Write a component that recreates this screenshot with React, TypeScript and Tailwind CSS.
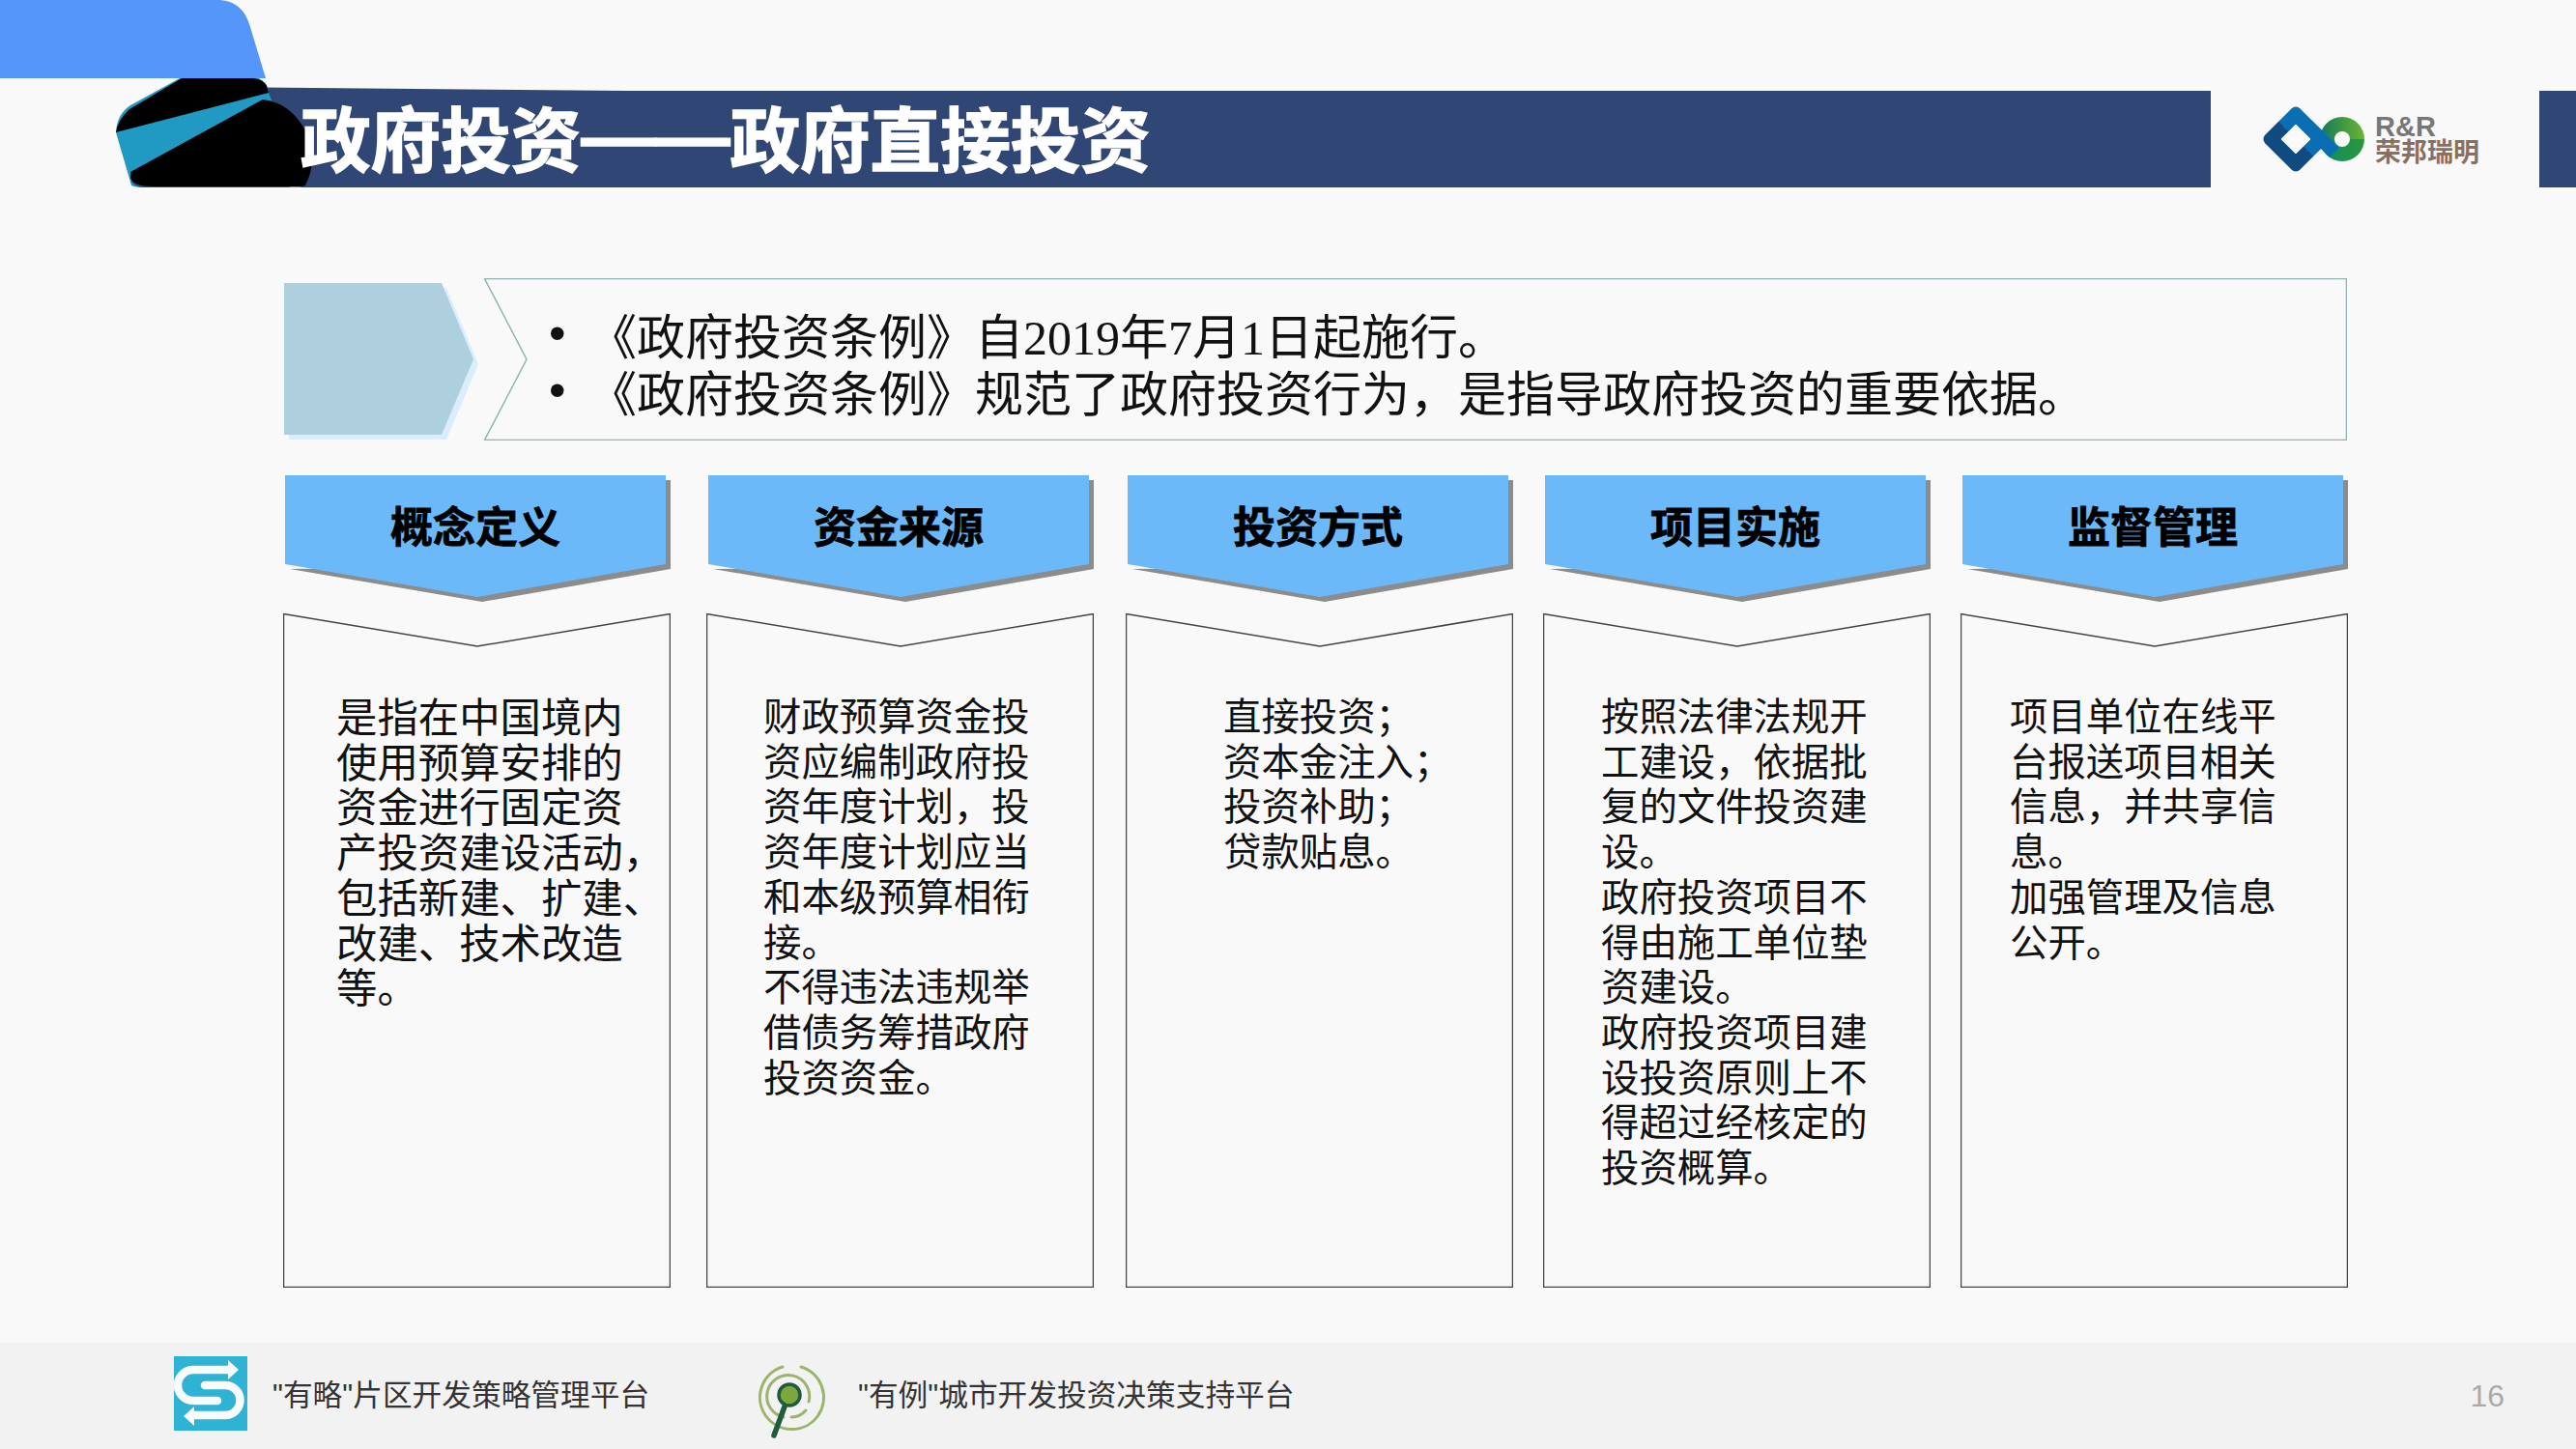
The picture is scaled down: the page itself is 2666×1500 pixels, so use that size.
import React from 'react';

const COLUMNS = [
  {
    title: '概念定义',
    gap: 'ml-0',
    text: 'pl-[55px] pt-[82px] text-[42.4px]',
    lines: ['是指在中国境内', '使用预算安排的', '资金进行固定资', '产投资建设活动，', '包括新建、扩建、', '改建、技术改造', '等。'],
  },
  {
    title: '资金来源',
    gap: 'ml-[37px]',
    text: 'pl-[59px] pt-[81px] text-[39.4px]',
    lines: ['财政预算资金投', '资应编制政府投', '资年度计划，投', '资年度计划应当', '和本级预算相衔', '接。', '不得违法违规举', '借债务筹措政府', '投资资金。'],
  },
  {
    title: '投资方式',
    gap: 'ml-[33px]',
    text: 'pl-[101px] pt-[81px] text-[39.4px]',
    lines: ['直接投资；', '资本金注入；', '投资补助；', '贷款贴息。'],
  },
  {
    title: '项目实施',
    gap: 'ml-[31px]',
    text: 'pl-[60px] pt-[81px] text-[39.4px]',
    lines: ['按照法律法规开', '工建设，依据批', '复的文件投资建', '设。', '政府投资项目不', '得由施工单位垫', '资建设。', '政府投资项目建', '设投资原则上不', '得超过经核定的', '投资概算。'],
  },
  {
    title: '监督管理',
    gap: 'ml-[31px]',
    text: 'pl-[51px] pt-[81px] text-[39.4px]',
    lines: ['项目单位在线平', '台报送项目相关', '信息，并共享信', '息。', '加强管理及信息', '公开。'],
  },
];

function CornerArt() {
  return (
    <svg className="absolute left-0 top-0" width="660" height="200" viewBox="0 0 660 200">
      <path d="M0 0H228Q252 2 259 28L275 81H0Z" fill="#5596fb" />
      <path d="M270 90.5L650 94H270Z" fill="#304775" />
      <path d="M186 81L135 109Q121 118 120 137L136 192Q140 194 150 194H310L316 190L278 96L276 88L268 81Z" fill="#2099c3" />
      <path d="M136 188Q140 194 150 194H300V185H136Z" fill="#304775" />
      <path d="M188 81H262Q273 82 276 89L278 96L120 137Q122 124 134 113Z" fill="#000" />
      <path d="M135 178L272 103Q300 106 316 135Q330 165 316 192Q314 193 308 193H158Q138 193 135 184Z" fill="#000" />
    </svg>
  );
}

function RongbangMark() {
  return (
    <svg width="120" height="80" viewBox="0 0 120 80">
      <defs>
        <linearGradient id="dia" x1="0" y1="4" x2="0" y2="76" gradientUnits="userSpaceOnUse">
          <stop offset="0.5" stopColor="#0b6db3" />
          <stop offset="0.5" stopColor="#0f4b80" />
        </linearGradient>
        <linearGradient id="ringTop" x1="64" y1="0" x2="109" y2="0" gradientUnits="userSpaceOnUse">
          <stop offset="0" stopColor="#127a5c" />
          <stop offset="1" stopColor="#6cb52d" />
        </linearGradient>
        <linearGradient id="ringBottom" x1="64" y1="0" x2="109" y2="0" gradientUnits="userSpaceOnUse">
          <stop offset="0" stopColor="#0f8c6a" />
          <stop offset="1" stopColor="#2b963a" />
        </linearGradient>
      </defs>
      <path d="M63 40A23 23 0 0 1 109 40Z" fill="url(#ringTop)" />
      <path d="M63 40A23 23 0 0 0 109 40Z" fill="url(#ringBottom)" />
      <circle cx="86" cy="40" r="8" fill="#f9f9f9" />
      <rect x="12.5" y="14.5" width="51" height="51" rx="6" transform="rotate(45 38 40)" fill="url(#dia)" />
      <path d="M50 26L78 54" stroke="#0b6db3" strokeWidth="14" />
      <rect x="27" y="29" width="22" height="22" rx="1" transform="rotate(45 38 40)" fill="#f9f9f9" />
    </svg>
  );
}

function SIcon() {
  return (
    <svg width="76" height="77" viewBox="0 0 76 77" className="shrink-0 -mt-[5px]">
      <rect width="76" height="77" fill="#2fb3d4" />
      <g fill="none" stroke="#f7fbfc" strokeWidth="8.5" strokeLinecap="round">
        <path d="M58 14H20A16 16 0 0 0 20 46H45" />
        <path d="M32 30H53A15.5 15.5 0 0 1 53 61H20" />
      </g>
      <path d="M67 14L56 4V24Z" fill="#f7fbfc" />
      <path d="M10 62L21 52V72Z" fill="#f7fbfc" />
    </svg>
  );
}

function ScopeIcon() {
  return (
    <svg width="100" height="95" viewBox="0 0 100 95" className="shrink-0">
      <g fill="none" stroke="#9cb36e" strokeWidth="3" strokeLinecap="round">
        <path d="M60 17A33 33 0 1 1 41 17" />
        <path d="M68 53A22 22 0 1 0 42 69" />
        <path d="M65 62A20 20 0 0 1 50 69" />
      </g>
      <path d="M43 58L32 88" stroke="#1f5b3c" strokeWidth="5.5" strokeLinecap="round" />
      <circle cx="48" cy="46" r="11" fill="#7aa83c" stroke="#1f5b3c" strokeWidth="3.5" />
    </svg>
  );
}

function Column({ col }: { col: (typeof COLUMNS)[number] }) {
  return (
    <div className={`w-[401px] shrink-0 flex flex-col ${col.gap}`}>
      <div className="relative h-[143px] pl-[2px]">
        <svg className="absolute left-0 top-0" width="401" height="143" viewBox="0 0 401 143">
          <path d="M7 97L206 131L401 97V5H396V92Z" fill="#8c8c8c" />
          <path d="M2 92L201 126L396 92V0H2Z" fill="#6bb9f9" />
        </svg>
        <div className="relative w-[394px] h-[101px] flex items-center justify-center text-[44px] font-bold leading-none text-black [-webkit-text-stroke:0.8px_black]">
          {col.title}
        </div>
      </div>
      <div className="relative flex-1">
        <svg className="absolute inset-0" width="401" height="698" viewBox="0 0 401 698">
          <path d="M0.5 0.5L201 34L400.5 0.5V697.5H0.5Z" fill="none" stroke="#444" strokeWidth="1.5" />
        </svg>
        <div className={`relative leading-[46.7px] text-[#111] ${col.text}`}>
          {col.lines.map(line => (
            <div key={line} className="whitespace-nowrap">{line}</div>
          ))}
        </div>
      </div>
    </div>
  );
}

export default function App() {
  return (
    <div className="relative w-[2666px] h-[1500px] overflow-hidden flex flex-col bg-[#f9f9f9] font-['Noto_Sans_CJK_SC',sans-serif]">
      <CornerArt />

      {/* header band */}
      <div className="mt-[94px] h-[100px] flex shrink-0">
        <div className="ml-[200px] w-[2088px] bg-[#304775] pl-[111px] flex items-center">
          <h1 className="relative z-10 -mt-[6px] h-[73px] flex items-center text-[72.6px] font-bold leading-none text-white whitespace-nowrap [-webkit-text-stroke:1.5px_white]">
            政府投资<span className="text-[77px] font-['Liberation_Sans',sans-serif]">——</span>政府直接投资
          </h1>
        </div>
        <div className="w-[340px] flex items-center pl-[50px]">
          <RongbangMark />
          <div className="flex flex-col">
            <span className="text-[29px] font-bold leading-[24px] text-[#777] font-['Liberation_Sans',sans-serif]">R&amp;R</span>
            <span className="text-[27px] font-bold leading-[28px] -mt-[1px] text-[#8b6f5c] whitespace-nowrap">荣邦瑞明</span>
          </div>
        </div>
        <div className="flex-1 bg-[#304775]" />
      </div>

      {/* policy summary */}
      <div className="mt-[94px] ml-[294px] h-[168px] flex shrink-0">
        <svg width="207" height="168" viewBox="0 0 207 168" className="shrink-0">
          <path d="M5 10H168L201 89L168 167H5Z" fill="#d9edfb" />
          <path d="M0 5H163L196 84L163 162H0Z" fill="#aed0de" />
        </svg>
        <div className="relative w-[1928px]">
          <svg className="absolute inset-0" width="1928" height="168" viewBox="0 0 1928 168">
            <path d="M0.5 0.5H1927.5V167.5H0.5L44 84Z" fill="none" stroke="#8fb5b3" strokeWidth="1.5" />
          </svg>
          <div className="relative h-full flex flex-col justify-center pl-[67px] pt-[5px] text-[50px] leading-[59px] text-[#111] whitespace-nowrap">
            <div className="flex h-[59px]">
              <span className="w-[41px] font-['Liberation_Sans',sans-serif]">•</span>
              <span>《政府投资条例》自<span className="font-['Liberation_Serif',serif]">2019</span>年<span className="font-['Liberation_Serif',serif]">7</span>月<span className="font-['Liberation_Serif',serif]">1</span>日起施行。</span>
            </div>
            <div className="flex h-[59px]">
              <span className="w-[41px] font-['Liberation_Sans',sans-serif]">•</span>
              <span>《政府投资条例》规范了政府投资行为，是指导政府投资的重要依据。</span>
            </div>
          </div>
        </div>
      </div>

      {/* five columns */}
      <div className="mt-[36px] ml-[293px] h-[841px] flex shrink-0">
        {COLUMNS.map(col => (
          <Column key={col.title} col={col} />
        ))}
      </div>

      {/* footer */}
      <div className="mt-auto h-[110px] bg-[#f2f2f2] flex items-center pl-[180px] pr-[74px] text-[30.7px] text-[#333] shrink-0">
        <SIcon />
        <span className="ml-[26px] -mt-[2px] w-[487px] whitespace-nowrap">
          <span className="font-['Liberation_Sans',sans-serif]">"</span>有略<span className="font-['Liberation_Sans',sans-serif]">"</span>片区开发策略管理平台
        </span>
        <ScopeIcon />
        <span className="ml-[19px] -mt-[2px] whitespace-nowrap">
          <span className="font-['Liberation_Sans',sans-serif]">"</span>有例<span className="font-['Liberation_Sans',sans-serif]">"</span>城市开发投资决策支持平台
        </span>
        <span className="ml-auto text-[32px] text-[#aaa] font-['Liberation_Sans',sans-serif]">16</span>
      </div>
    </div>
  );
}
